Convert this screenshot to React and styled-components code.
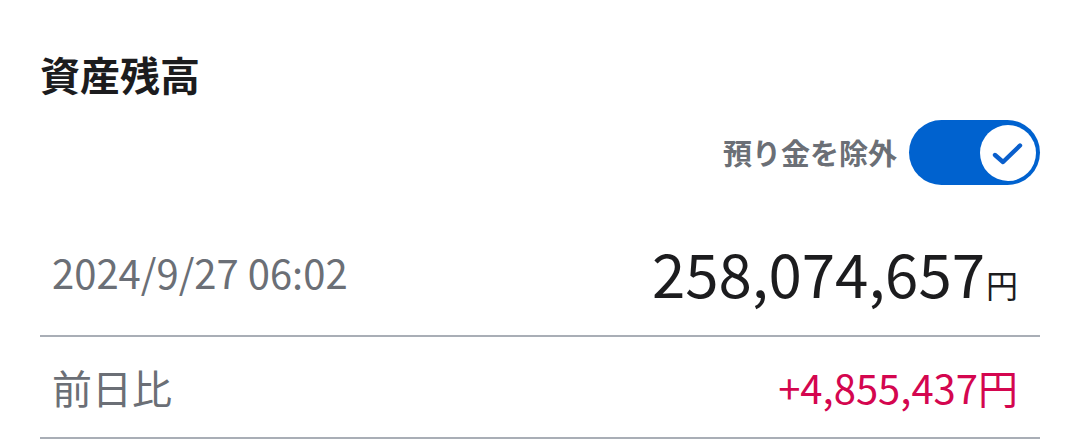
import React from "react";
import styled, { createGlobalStyle } from "styled-components";

const Global = createGlobalStyle`
  html, body { margin: 0; padding: 0; background: #ffffff; }
  body { font-family: "Noto Sans CJK JP", "Noto Sans", sans-serif; }
`;

const Page = styled.div`
  padding: 0 40px;
  width: 1000px;
`;

const Title = styled.h2`
  margin: 54px 0 0;
  font-size: 40px;
  line-height: 40px;
  font-weight: 700;
  color: #1c1c1e;
`;

const ToggleRow = styled.div`
  margin-top: 26px;
  display: flex;
  justify-content: flex-end;
  align-items: center;
  gap: 12px;
`;

const ToggleLabel = styled.span`
  font-size: 29px;
  font-weight: 700;
  color: #6b6f76;
  line-height: 1;
`;

const Switch = styled.button`
  width: 131px;
  height: 65px;
  border: none;
  border-radius: 33px;
  background: #0062cf;
  padding: 0 4px;
  display: flex;
  align-items: center;
  justify-content: ${(p) => (p.$on ? "flex-end" : "flex-start")};
  cursor: pointer;
`;

const Knob = styled.span`
  width: 56px;
  height: 56px;
  border-radius: 50%;
  background: #ffffff;
  display: flex;
  align-items: center;
  justify-content: center;
`;

const Row = styled.div`
  margin-top: ${(p) => p.$mt || 0}px;
  height: ${(p) => p.$h}px;
  box-sizing: border-box;
  border-bottom: 2px solid #a9aeb6;
  display: flex;
  align-items: center;
  justify-content: space-between;
  padding: 0 22px 0 12px;
`;

const Label = styled.span`
  font-size: 40px;
  line-height: 1;
  color: #6b6f76;
`;

const Amount = styled.span`
  display: flex;
  align-items: baseline;
  color: ${(p) => p.$color || "#1c1c1e"};
  font-size: ${(p) => p.$size}px;
  line-height: 1;
`;

const Unit = styled.span`
  font-size: ${(p) => p.$size}px;
  margin-left: 1px;
`;

export default function App() {
  return (
    <Page>
      <Global />
      <Title>資産残高</Title>
      <ToggleRow>
        <ToggleLabel>預り金を除外</ToggleLabel>
        <Switch $on aria-pressed="true">
          <Knob>
            <svg width="34" height="34" viewBox="0 0 34 34">
              <path
                d="M4 19 L12 26 L29 9.5"
                fill="none"
                stroke="#0a5fcc"
                strokeWidth="4.4"
                strokeLinecap="round"
                strokeLinejoin="round"
              />
            </svg>
          </Knob>
        </Switch>
      </ToggleRow>
      <Row $mt={23} $h={129}>
        <Label>2024/9/27 06:02</Label>
        <Amount $size={60}>
          258,074,657<Unit $size={32}>円</Unit>
        </Amount>
      </Row>
      <Row $h={102}>
        <Label>前日比</Label>
        <Amount $size={40} $color="#d4064f">
          +4,855,437円
        </Amount>
      </Row>
    </Page>
  );
}
